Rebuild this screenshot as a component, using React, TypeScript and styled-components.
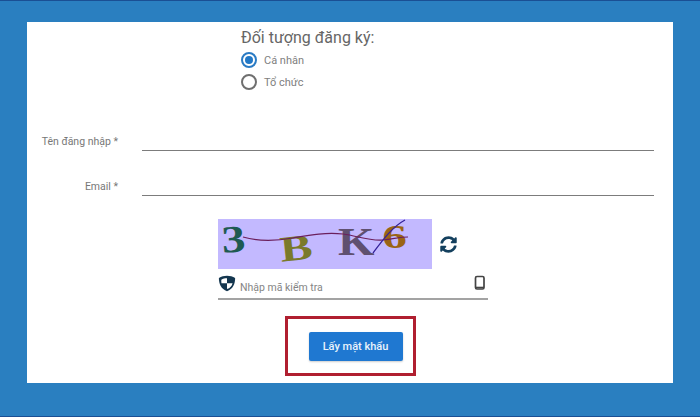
import styled, { createGlobalStyle } from 'styled-components';

const GlobalStyle = createGlobalStyle`
  html, body {
    margin: 0;
    padding: 0;
  }
  body {
    font-family: Roboto, "Liberation Sans", sans-serif;
  }
`;

const Page = styled.div`
  box-sizing: border-box;
  width: 700px;
  height: 417px;
  padding: 21px 27px 34px;
  background: #2a7fc0;
  border-top: 1px solid #1a4f94;
  border-bottom: 1px solid #1a4f94;
  overflow: hidden;
`;

const Card = styled.div`
  box-sizing: border-box;
  height: 361px;
  background: #fff;
  padding-top: 6px;
  display: flex;
  flex-direction: column;
`;

const TypeBlock = styled.div`
  margin-left: 214px;
  display: flex;
  flex-direction: column;
`;

const Heading = styled.div`
  font-size: 16px;
  line-height: 20px;
  color: #666;
  margin-bottom: 1px;
`;

const RadioRow = styled.label`
  display: flex;
  align-items: center;
  gap: 7px;
  height: 22px;
  font-size: 11px;
  color: #808080;
`;

const RadioMark = styled.span<{ $checked?: boolean }>`
  box-sizing: border-box;
  width: 16px;
  height: 16px;
  border-radius: 50%;
  border: 2px solid ${p => (p.$checked ? '#2a7bc4' : '#6f6f6f')};
  display: flex;
  align-items: center;
  justify-content: center;

  &::after {
    content: '';
    display: ${p => (p.$checked ? 'block' : 'none')};
    width: 8px;
    height: 8px;
    border-radius: 50%;
    background: #2278c6;
  }
`;

const Fields = styled.div`
  margin-top: 36px;
  display: flex;
  flex-direction: column;
  gap: 23px;
`;

const FieldRow = styled.div`
  display: flex;
  align-items: flex-end;
  height: 22px;
`;

const FieldLabel = styled.div`
  width: 91px;
  text-align: right;
  font-size: 10.5px;
  line-height: 14px;
  color: #777;
  padding-bottom: 2px;
  flex: none;
`;

const FieldLine = styled.div`
  margin-left: 24px;
  width: 512px;
  border-bottom: 1px solid #7c7c7c;
`;

const CaptchaBlock = styled.div`
  margin: 23px 0 0 191px;
  width: 270px;
`;

const CaptchaRow = styled.div`
  display: flex;
  align-items: center;
  gap: 6px;
`;

const CaptchaImage = styled.div`
  position: relative;
  width: 214px;
  height: 50px;
  background: #c3b9ff;
  font-family: "Liberation Serif", serif;
  font-weight: 700;
`;

const CaptchaChar = styled.span<{
  $color: string;
  $left: number;
  $top: number;
  $size: number;
  $rotate: number;
  $stretch: number;
}>`
  position: absolute;
  left: ${p => p.$left}px;
  top: ${p => p.$top}px;
  font-size: ${p => p.$size}px;
  line-height: 1;
  color: ${p => p.$color};
  transform: rotate(${p => p.$rotate}deg) scaleX(${p => p.$stretch});
`;

const CaptchaStroke = styled.svg`
  position: absolute;
  left: 0;
  top: -4px;
  width: 214px;
  height: 54px;
  overflow: visible;
`;

const RefreshBtn = styled.span`
  display: flex;
  width: 20px;
  height: 20px;
  align-items: center;
  justify-content: center;
  color: #14405e;
`;

const CodeInput = styled.div`
  margin-top: 4px;
  height: 25px;
  display: flex;
  align-items: center;
  border-bottom: 2px solid #a3a3a3;
  font-size: 10.5px;
  color: #858585;
`;

const CodeText = styled.span`
  margin-left: 4px;
  padding-top: 4px;
  flex: 1;
`;

const InputIcon = styled.svg`
  flex: none;
  margin-top: -4px;
`;

const ButtonArea = styled.div`
  margin-top: 16px;
  display: flex;
  justify-content: center;
`;

const Highlight = styled.div`
  box-sizing: border-box;
  width: 131px;
  height: 60px;
  padding-left: 21px;
  border: 3px solid #b01f30;
  display: flex;
  align-items: center;
`;

const SubmitButton = styled.button`
  width: 94px;
  height: 29px;
  border: none;
  border-radius: 2px;
  background: #1f78d1;
  color: #eaf3fb;
  font-family: Roboto, "Liberation Sans", sans-serif;
  font-size: 11px;
  font-weight: 500;
  box-shadow: 0 1px 2px rgba(0, 0, 0, 0.2);
`;

export default function App() {
  return (
    <>
      <GlobalStyle />
      <Page>
        <Card>
          <TypeBlock>
            <Heading>Đối tượng đăng ký:</Heading>
            <RadioRow>
              <RadioMark $checked />
              Cá nhân
            </RadioRow>
            <RadioRow>
              <RadioMark />
              Tổ chức
            </RadioRow>
          </TypeBlock>

          <Fields>
            <FieldRow>
              <FieldLabel>Tên đăng nhập *</FieldLabel>
              <FieldLine />
            </FieldRow>
            <FieldRow>
              <FieldLabel>Email *</FieldLabel>
              <FieldLine />
            </FieldRow>
          </Fields>

          <CaptchaBlock>
            <CaptchaRow>
              <CaptchaImage>
                <CaptchaChar $color="#1f5a52" $left={6} $top={1} $size={38} $rotate={-4} $stretch={1.25}>3</CaptchaChar>
                <CaptchaChar $color="#7a7a2a" $left={66} $top={11} $size={36} $rotate={-6} $stretch={1.35}>B</CaptchaChar>
                <CaptchaChar $color="#5f5070" $left={123} $top={3} $size={39} $rotate={0} $stretch={1.2}>K</CaptchaChar>
                <CaptchaChar $color="#9a6414" $left={168} $top={1} $size={34} $rotate={0} $stretch={1.45}>6</CaptchaChar>
                <CaptchaStroke viewBox="0 0 214 54">
                  <path
                    d="M25 22C42 27 58 26 75 23C92 20 108 17 125 19C140 21 150 26 165 25C175 24 183 22 190 22"
                    fill="none"
                    stroke="#6b1f5c"
                    strokeWidth="1.2"
                  />
                  <path d="M155 38C164 26 174 12 187 5" fill="none" stroke="#33209a" strokeWidth="1.3" />
                </CaptchaStroke>
              </CaptchaImage>
              <RefreshBtn>
                <svg width="17" height="17" viewBox="0 0 512 512" fill="currentColor">
                  <path d="M370.7 133.3C339.5 104 298.9 88 255.8 88c-77.5.1-144.3 53.2-162.8 126.9-1.3 5.4-6.1 9.2-11.7 9.2H24.1c-7.5 0-13.2-6.8-11.8-14.2C33.9 94.9 134.8 8 256 8c66.4 0 126.8 26.1 171.3 68.7L463 41c15.1-15.1 41-4.4 41 17v134c0 13.3-10.7 24-24 24H346c-21.4 0-32.1-25.9-17-41l41.7-41.7zM32 296h134c21.4 0 32.1 25.9 17 41l-41.7 41.7c31.2 29.3 71.8 45.3 114.9 45.3 77.4-.1 144.3-53.1 162.8-126.8 1.3-5.4 6.1-9.2 11.7-9.2h57.3c7.5 0 13.2 6.8 11.8 14.2C478.1 417.1 377.2 504 256 504c-66.4 0-126.8-26.1-171.3-68.7L49 471c-15.1 15.1-41 4.4-41-17V320c0-13.3 10.7-24 24-24z" />
                </svg>
              </RefreshBtn>
            </CaptchaRow>
            <CodeInput>
              <InputIcon width="18" height="17" viewBox="0 0 24 23">
                <path d="M12 1c4 0 8 1 11 3 0 8-3 15-11 18C4 19 1 12 1 4c3-2 7-3 11-3z" fill="#14364f" />
                <path d="M12 4.500v6.500H4.500c-.2-1.600-.3-3-.2-4.600 2.300-1.200 4.900-1.900 7.700-1.900zM12 11h7.500c-.8 3.600-3.400 6.500-7.500 8V11z" fill="#fff" />
              </InputIcon>
              <CodeText>Nhập mã kiểm tra</CodeText>
              <InputIcon width="16" height="17" viewBox="0 0 16 17">
                <rect x="3.500" y="1.500" width="8.500" height="12.500" rx="1.500" fill="none" stroke="#444" strokeWidth="1.700" />
                <path d="M4 12.500h8" stroke="#444" strokeWidth="1.600" />
              </InputIcon>
            </CodeInput>
          </CaptchaBlock>

          <ButtonArea>
            <Highlight>
              <SubmitButton>Lấy mật khẩu</SubmitButton>
            </Highlight>
          </ButtonArea>
        </Card>
      </Page>
    </>
  );
}
